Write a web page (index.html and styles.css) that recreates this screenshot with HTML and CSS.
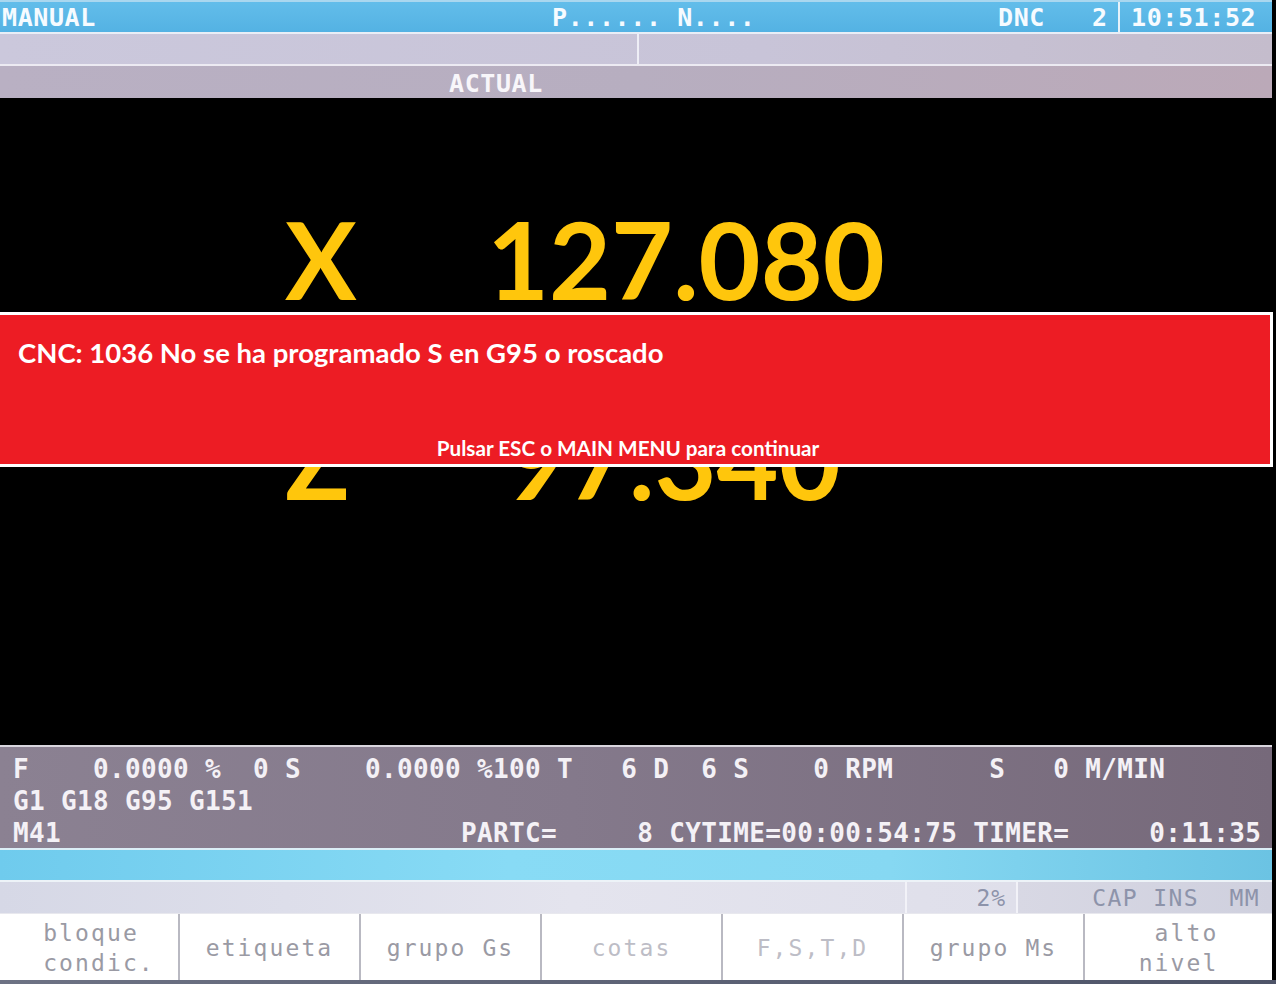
FILE: index.html
```html
<!DOCTYPE html>
<html lang="es">
<head>
<meta charset="utf-8">
<title>CNC MANUAL</title>
<link rel="stylesheet" href="styles.css">
</head>
<body>
<div class="screen">
  <div class="topbar">
    <span class="mode">MANUAL</span>
    <span class="prog">P...... N....</span>
    <span class="dnc">DNC   2</span>
    <span class="clock">10:51:52</span>
  </div>
  <div class="row2">
    <div class="row2-left"></div>
    <div class="row2-right"></div>
  </div>
  <div class="row3"><span class="title">ACTUAL</span></div>
  <div class="main">
    <div class="axis axis-x">
      <span class="axis-name">X</span>
      <span class="axis-val">127.080</span>
    </div>
    <div class="axis axis-z">
      <span class="axis-name">Z</span>
      <span class="axis-val axis-val-z">97.340</span>
    </div>
    <div class="alarm">
      <div class="alarm-msg">CNC: 1036 No se ha programado S en G95 o roscado</div>
      <div class="alarm-hint">Pulsar ESC o MAIN MENU para continuar</div>
    </div>
  </div>
  <div class="status">
<pre class="status-line">F    0.0000 %  0 S    0.0000 %100 T   6 D  6 S    0 RPM      S   0 M/MIN</pre>
<pre class="status-line">G1 G18 G95 G151</pre>
<pre class="status-line">M41                         PARTC=     8 CYTIME=00:00:54:75 TIMER=     0:11:35</pre>
  </div>
  <div class="cyanbar"></div>
  <div class="inforow">
    <div class="info-cell info-wide"></div>
    <div class="info-cell info-pct">2%</div>
    <div class="info-cell info-flags">CAP INS  MM</div>
  </div>
  <div class="softkeys">
    <div class="key key-first"><span class="key-text">bloque
condic.</span></div>
    <div class="key"><span class="key-text">etiqueta</span></div>
    <div class="key"><span class="key-text">grupo Gs</span></div>
    <div class="key key-faint"><span class="key-text">cotas</span></div>
    <div class="key key-faint"><span class="key-text">F,S,T,D</span></div>
    <div class="key"><span class="key-text">grupo Ms</span></div>
    <div class="key key-last"><span class="key-text"> alto
nivel</span></div>
  </div>
  <div class="bottom-edge"></div>
</div>
</body>
</html>
```
FILE: styles.css
```css
html, body {
  margin: 0;
  padding: 0;
  background: #000;
}
body {
  width: 1276px;
  height: 984px;
  overflow: hidden;
}
.screen {
  width: 1276px;
  height: 984px;
  display: flex;
  flex-direction: column;
  background: #000;
}

/* top bar */
.topbar {
  height: 30px;
  border-top: 2px solid #a9d7ef;
  border-bottom: 2px solid #e9eef6;
  background: linear-gradient(180deg, #62bdea 0%, #54b2e3 100%);
  display: flex;
  align-items: center;
  font-family: "DejaVu Sans Mono", monospace;
  font-weight: bold;
  font-size: 25px;
  letter-spacing: 0.6px;
  color: #f6fbff;
  white-space: pre;
  margin-right: 4px;
}
.mode {
  width: 550px;
  padding-left: 2px;
}
.prog {
  width: 446px;
}
.dnc {
  width: 120px;
  align-self: stretch;
  display: flex;
  align-items: center;
}
.clock {
  align-self: stretch;
  display: flex;
  align-items: center;
  border-left: 2px solid #e6f2fa;
  padding-left: 11px;
  flex: 1;
}

.row2 {
  height: 30px;
  border-bottom: 2px solid #eceaf2;
  display: flex;
  background: linear-gradient(90deg, #cbc8dc 0%, #c8c4d8 60%, #c4bccc 100%);
  margin-right: 4px;
}
.row2-left {
  width: 637px;
  border-right: 2px solid #eeeef6;
}
.row2-right {
  flex: 1;
}

.row3 {
  height: 32px;
  background: linear-gradient(90deg, #b9b0c3 0%, #b7aec0 50%, #bba9b8 100%);
  display: flex;
  align-items: center;
  font-family: "DejaVu Sans Mono", monospace;
  font-weight: bold;
  font-size: 25px;
  letter-spacing: 0.6px;
  color: #f8f6fa;
  margin-right: 4px;
}
.title {
  padding-left: 449px;
  padding-top: 2px;
}

/* main black area */
.main {
  height: 647px;
  position: relative;
  background: #000;
  display: flex;
  flex-direction: column;
  padding-top: 108px;
  box-sizing: border-box;
  gap: 94px;
}
.axis {
  display: flex;
  font-family: "Lato", sans-serif;
  font-weight: bold;
  font-size: 107px;
  line-height: 106px;
  height: 106px;
  color: #ffc60c;
  padding-left: 285px;
}
.axis-name {
  width: 202px;
}
.axis-val-z {
  padding-left: 18px;
}

.alarm {
  position: absolute;
  left: 0;
  top: 214px;
  width: 1273px;
  height: 155px;
  border: 3px solid #ffffff;
  border-left: none;
  background: #ed1c24;
  color: #ffffff;
  font-family: "Lato", sans-serif;
  font-weight: bold;
  display: flex;
  flex-direction: column;
  justify-content: space-between;
  padding: 22px 0 4px 18px;
  box-sizing: border-box;
}
.alarm-msg {
  font-size: 27.5px;
  line-height: 32px;
}
.alarm-hint {
  font-size: 20.7px;
  line-height: 24px;
  text-align: center;
  padding-right: 32px;
}

/* status panel */
.status {
  border-top: 2px solid #d9d6de;
  background: linear-gradient(90deg, #8b8192 0%, #84798b 45%, #76697a 100%);
  padding: 6px 0 0 13px;
  box-sizing: content-box;
  margin-right: 4px;
  height: 95px;
}
.status-line {
  margin: 0;
  font-family: "DejaVu Sans Mono", monospace;
  font-weight: bold;
  font-size: 26px;
  letter-spacing: 0.35px;
  line-height: 32px;
  color: #f4f1f6;
  white-space: pre;
}

.cyanbar {
  height: 30px;
  border-top: 2px solid #dbeef6;
  background: linear-gradient(90deg, #6fcbed 0%, #88dbf5 40%, #86d8f2 70%, #6bc3e3 100%);
  margin-right: 4px;
}

.inforow {
  height: 31px;
  border-top: 2px solid #edf3f8;
  display: flex;
  background: linear-gradient(90deg, #d6d8e6 0%, #e4e4ee 45%, #dcdce8 100%);
  font-family: "DejaVu Sans Mono", monospace;
  font-size: 23px;
  letter-spacing: 0.9px;
  color: #8d93aa;
  margin-right: 4px;
}
.info-cell {
  display: flex;
  align-items: center;
  justify-content: flex-end;
  white-space: pre;
}
.info-wide {
  width: 905px;
  border-right: 2px solid #f2f2f8;
}
.info-pct {
  width: 111px;
  border-right: 2px solid #f2f2f8;
  box-sizing: border-box;
  padding-right: 10px;
}
.info-flags {
  flex: 1;
  padding-right: 12px;
  letter-spacing: 1.4px;
  background: linear-gradient(90deg, #d8d8e4 0%, #cfd0de 100%);
}

/* softkeys */
.softkeys {
  height: 67px;
  display: flex;
  background: #ffffff;
  margin-right: 4px;
  border-top: 1px solid #e8e8ee;
  box-sizing: border-box;
}
.key {
  width: 181px;
  border-right: 2px solid #b9b9c2;
  box-sizing: border-box;
  display: flex;
  align-items: center;
  justify-content: center;
  font-family: "DejaVu Sans Mono", monospace;
  font-size: 23px;
  letter-spacing: 2.1px;
  line-height: 30px;
  color: #9a9aa4;
}
.key-first {
  width: 180px;
  padding-left: 20px;
}
.key-faint {
  color: #bdbdc6;
}
.key-last {
  flex: 1;
  border-right: none;
}
.key-text {
  white-space: pre;
  text-align: left;
  padding-top: 2px;
}

.bottom-edge {
  height: 4px;
  background: linear-gradient(90deg, #6d7284, #4e5468);
}
```
